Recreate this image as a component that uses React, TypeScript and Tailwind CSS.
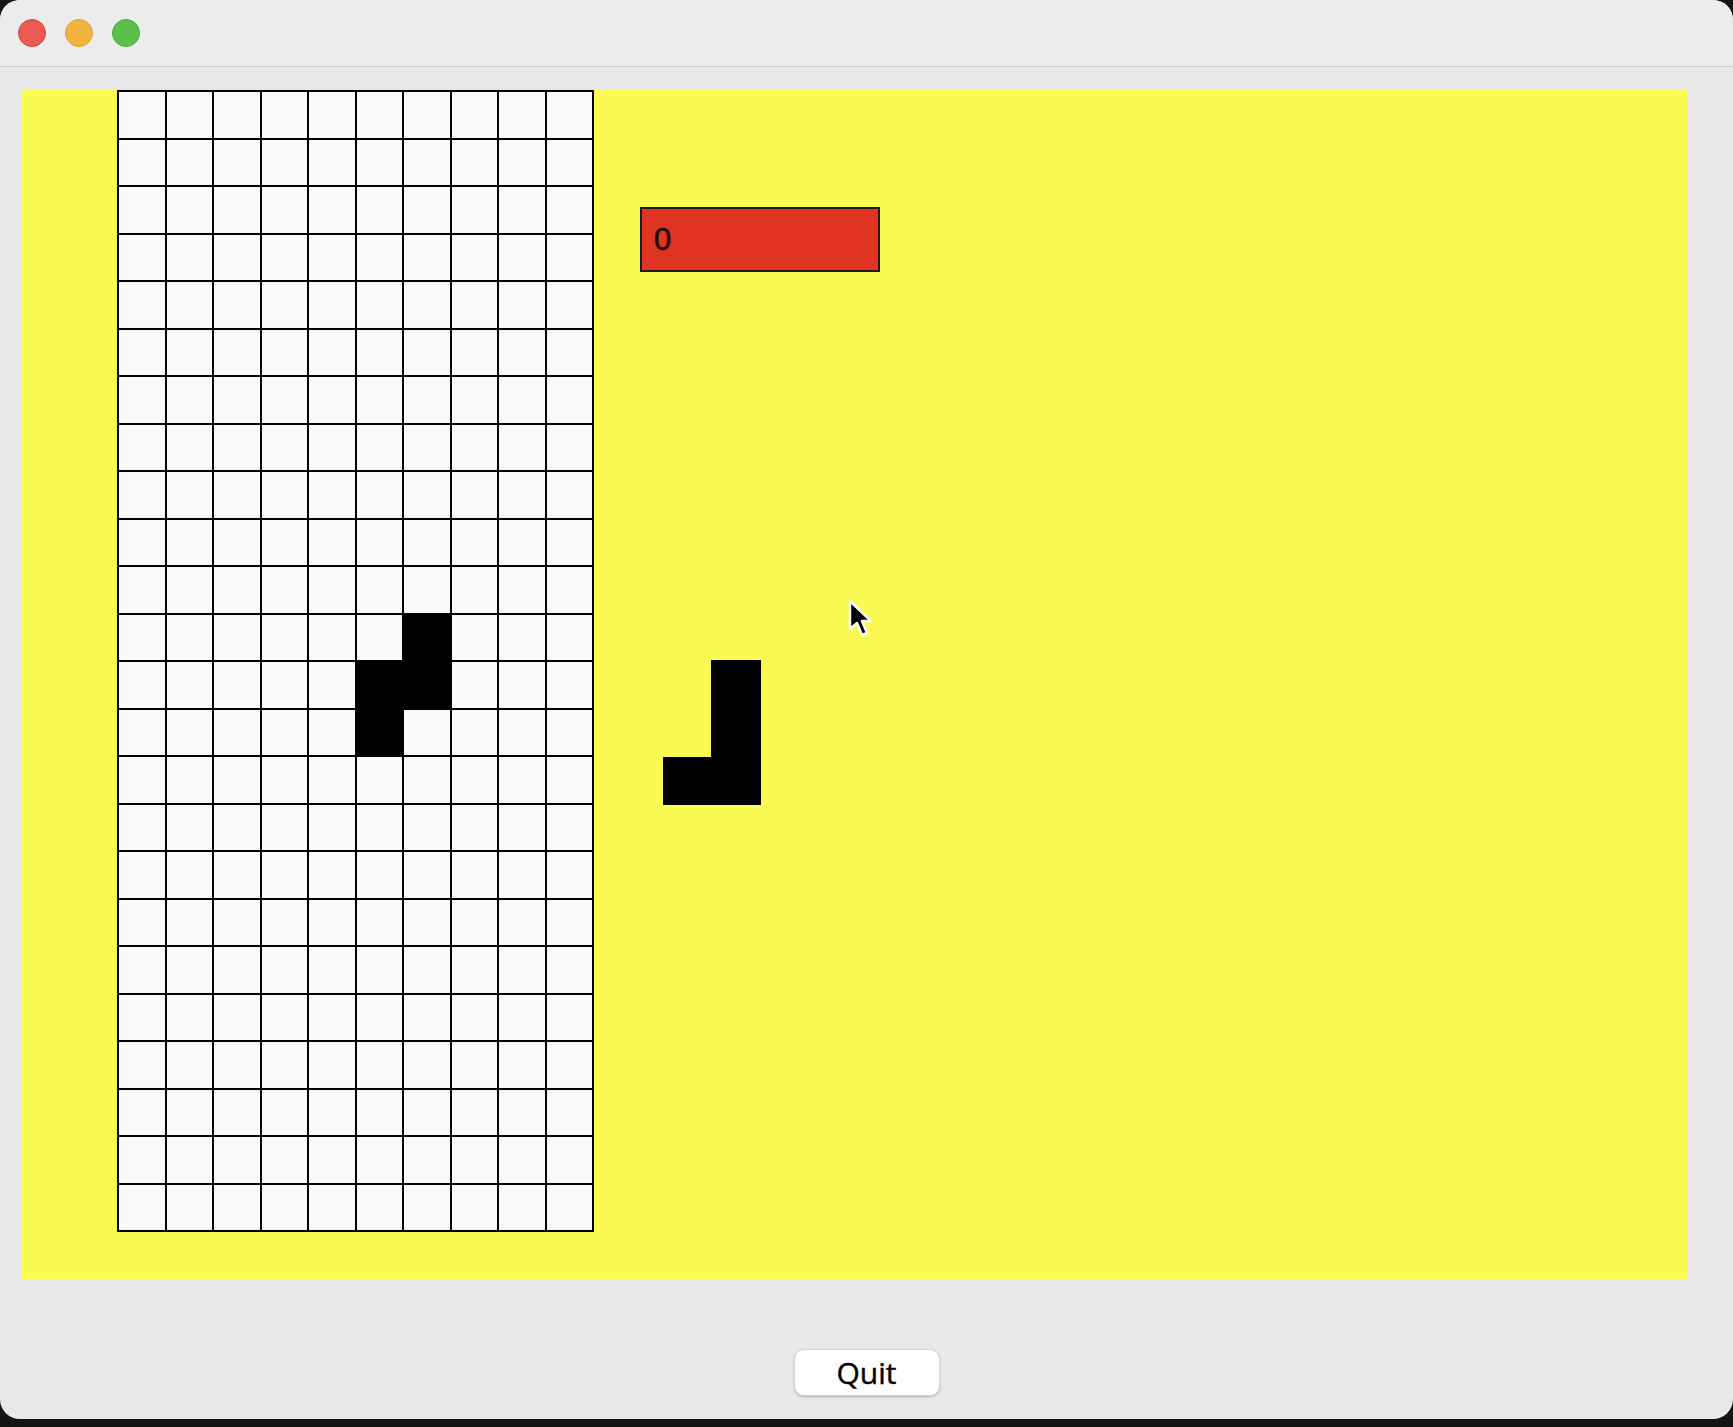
const ROWS = 24;
const COLS = 10;

// falling S piece on the board
const filled = new Set(["11-6", "12-5", "12-6", "13-5"]);

// next piece preview (J)
const nextPiece = [
  [0, 1],
  [0, 1],
  [1, 1],
];

const Board = () => {
  const cells = [];
  for (let r = 0; r < ROWS; r++) {
    for (let c = 0; c < COLS; c++) {
      const on = filled.has(`${r}-${c}`);
      cells.push(
        <div
          key={`${r}-${c}`}
          className={on ? "bg-black" : "bg-[#fafafa]"}
        />
      );
    }
  }
  return (
    <div className="grid grid-cols-10 grid-rows-[repeat(24,minmax(0,1fr))] gap-[2px] p-[2px] bg-black w-[477px] h-[1142px] shrink-0">
      {cells}
    </div>
  );
};

const Cursor = () => (
  <svg
    className="absolute left-[847px] top-[598px]"
    width="28"
    height="42"
    viewBox="0 0 28 42"
  >
    <path
      d="M3 3 L3 31 L10 25 L15 37 L20 35 L15 23 L24 23 Z"
      fill="black"
      stroke="white"
      strokeWidth="2.5"
      strokeLinejoin="round"
    />
  </svg>
);

export default function App() {
  return (
    <div className="w-[1733px] h-[1427px] bg-[#141414] relative">
      <div className="w-[1733px] h-[1419px] bg-[#e8e8e8] rounded-[20px] overflow-hidden flex flex-col">
        {/* title bar */}
        <div className="h-[67px] bg-[#ececec] border-b border-[#cfcfcf] flex items-start gap-[19px] pl-[18px] pt-[19px] shrink-0">
          <div className="w-[28px] h-[28px] rounded-full bg-[#eb5a52] border border-[#d2463e]" />
          <div className="w-[28px] h-[28px] rounded-full bg-[#f2b43f] border border-[#d99d32]" />
          <div className="w-[28px] h-[28px] rounded-full bg-[#5bc04a] border border-[#4aa73c]" />
        </div>

        {/* game area */}
        <div className="ml-[22px] mt-[22px] w-[1666px] h-[1190px] bg-[#fbfa55] flex pl-[95px] pt-[1px] gap-[46px] shrink-0">
          <Board />
          <div className="flex flex-col pt-[117px]">
            <div className="w-[240px] h-[65px] bg-[#e03322] border-2 border-[#1e1a17] flex items-center pl-[12px]">
              <span className="text-[31px] leading-none text-[#1f0604] font-['Liberation_Sans',sans-serif] [-webkit-text-stroke:0.6px_#1f0604]">
                0
              </span>
            </div>
            <div className="ml-[23px] mt-[388px] grid grid-cols-[48px_50px] grid-rows-[repeat(3,48.3px)] w-[98px]">
              {nextPiece.flat().map((v, i) => (
                <div key={i} className={v ? "bg-black" : ""} />
              ))}
            </div>
          </div>
        </div>

        {/* bottom bar */}
        <div className="flex justify-center pt-[70px]">
          <button className="w-[146px] h-[47px] bg-white rounded-[10px] shadow-[0_1px_2px_rgba(0,0,0,0.25)] border border-[#d6d6d6] text-[30px] text-black font-['Open_Sans',sans-serif] [-webkit-text-stroke:0.4px_black] flex items-center justify-center">
            Quit
          </button>
        </div>
      </div>
      <Cursor />
    </div>
  );
}
